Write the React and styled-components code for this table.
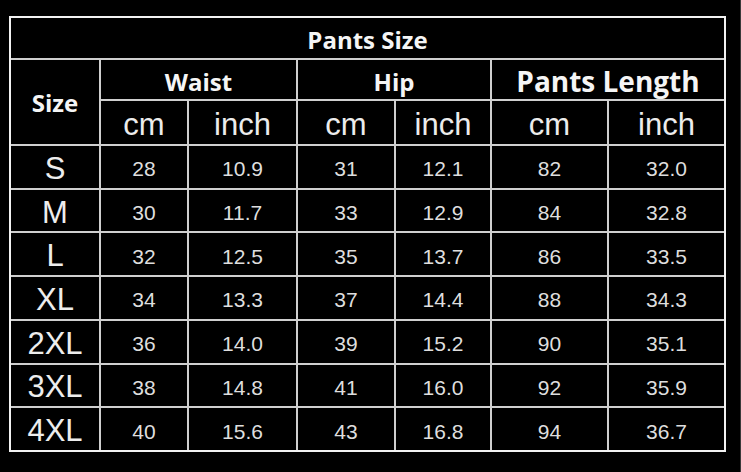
import React from "react";
import styled, { createGlobalStyle } from "styled-components";

const Global = createGlobalStyle`
  html, body { margin: 0; padding: 0; background: #000; }
  body { font-family: "Liberation Sans", Arial, sans-serif; }
`;

const Page = styled.div`
  box-sizing: border-box;
  width: 741px;
  height: 472px;
  background: #000;
  padding: 16px 0 0 9px;
  border-right: 1px solid #3a3a3a;
`;

const Chart = styled.div`
  box-sizing: border-box;
  width: 717px;
  height: 436px;
  display: grid;
  grid-template-columns: 88px 86px 107px 96px 94px 115px 115px;
  grid-template-rows: 40px 39px 43px repeat(7, 1fr);
  gap: 2px;
  background: #cfcfcf;
  border: 2px solid #f2f2f2;
`;

const Cell = styled.div`
  background: #000;
  display: flex;
  align-items: center;
  justify-content: center;
  color: ${(p) => p.$color || "#e2e2e2"};
  grid-column: ${(p) => p.$col || "auto"};
  grid-row: ${(p) => p.$row || "auto"};
  padding-top: ${(p) => p.$pt || 0}px;
  white-space: nowrap;
  overflow: hidden;
`;

const Heading = styled(Cell)`
  font-family: "Open Sans", "Liberation Sans", sans-serif;
  font-weight: 700;
  font-size: ${(p) => p.$size || 24}px;
  color: #f5f5f5;
`;

const Unit = styled(Cell)`
  font-size: 31px;
  color: #ececec;
  padding-top: 4px;
`;

const SizeLabel = styled(Cell)`
  font-size: 31px;
  color: #ededed;
  padding-top: 4px;
`;

const Value = styled(Cell)`
  font-size: 21px;
  color: #dedede;
  padding-top: 5px;
`;

const rows = [
  ["S", "28", "10.9", "31", "12.1", "82", "32.0"],
  ["M", "30", "11.7", "33", "12.9", "84", "32.8"],
  ["L", "32", "12.5", "35", "13.7", "86", "33.5"],
  ["XL", "34", "13.3", "37", "14.4", "88", "34.3"],
  ["2XL", "36", "14.0", "39", "15.2", "90", "35.1"],
  ["3XL", "38", "14.8", "41", "16.0", "92", "35.9"],
  ["4XL", "40", "15.6", "43", "16.8", "94", "36.7"],
];

export default function App() {
  return (
    <>
      <Global />
      <Page>
        <Chart>
          <Heading $col="1 / 8" $size={24} $pt={2}>Pants Size</Heading>
          <Heading $row="2 / 4" $size={24}>Size</Heading>
          <Heading $col="2 / 4" $pt={3}>Waist</Heading>
          <Heading $col="4 / 6" $pt={3}>Hip</Heading>
          <Heading $col="6 / 8" $size={28} $pt={3}>Pants Length</Heading>
          <Unit>cm</Unit>
          <Unit>inch</Unit>
          <Unit>cm</Unit>
          <Unit>inch</Unit>
          <Unit>cm</Unit>
          <Unit>inch</Unit>
          {rows.map((r) => (
            <React.Fragment key={r[0]}>
              <SizeLabel>{r[0]}</SizeLabel>
              {r.slice(1).map((v, i) => (
                <Value key={i}>{v}</Value>
              ))}
            </React.Fragment>
          ))}
        </Chart>
      </Page>
    </>
  );
}
